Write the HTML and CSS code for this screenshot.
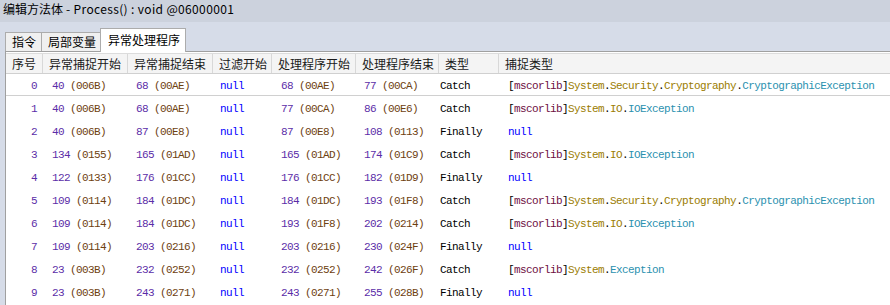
FILE: index.html
```html
<!DOCTYPE html>
<html>
<head>
<meta charset="utf-8">
<link rel="stylesheet" href="styles.css">
</head>
<body>
<div class="title">编辑方法体<span class="latin"> - Process() : void @06000001</span></div>
<div class="main">
  <div class="tabs">
    <div class="tab">指令</div>
    <div class="tab">局部变量</div>
    <div class="tab active">异常处理程序</div>
  </div>
  <div class="panel">
    <div class="grid head">
      <div class="hc">序号</div>
      <div class="hc">异常捕捉开始</div>
      <div class="hc">异常捕捉结束</div>
      <div class="hc">过滤开始</div>
      <div class="hc">处理程序开始</div>
      <div class="hc">处理程序结束</div>
      <div class="hc">类型</div>
      <div class="hc">捕捉类型</div>
    </div>

    <div class="grid row focus">
      <div class="c1 n">0</div>
      <div class="c2"><span class="n">40</span> <span class="h">(006B)</span></div>
      <div class="c3"><span class="n">68</span> <span class="h">(00AE)</span></div>
      <div class="c4 k">null</div>
      <div class="c5"><span class="n">68</span> <span class="h">(00AE)</span></div>
      <div class="c6"><span class="n">77</span> <span class="h">(00CA)</span></div>
      <div class="c7">Catch</div>
      <div class="c8">[<span class="a">mscorlib</span>]<span class="ns">System</span>.<span class="ns">Security</span>.<span class="ns">Cryptography</span>.<span class="t">CryptographicException</span></div>
    </div>

    <div class="grid row">
      <div class="c1 n">1</div>
      <div class="c2"><span class="n">40</span> <span class="h">(006B)</span></div>
      <div class="c3"><span class="n">68</span> <span class="h">(00AE)</span></div>
      <div class="c4 k">null</div>
      <div class="c5"><span class="n">77</span> <span class="h">(00CA)</span></div>
      <div class="c6"><span class="n">86</span> <span class="h">(00E6)</span></div>
      <div class="c7">Catch</div>
      <div class="c8">[<span class="a">mscorlib</span>]<span class="ns">System</span>.<span class="ns">IO</span>.<span class="t">IOException</span></div>
    </div>

    <div class="grid row">
      <div class="c1 n">2</div>
      <div class="c2"><span class="n">40</span> <span class="h">(006B)</span></div>
      <div class="c3"><span class="n">87</span> <span class="h">(00E8)</span></div>
      <div class="c4 k">null</div>
      <div class="c5"><span class="n">87</span> <span class="h">(00E8)</span></div>
      <div class="c6"><span class="n">108</span> <span class="h">(0113)</span></div>
      <div class="c7">Finally</div>
      <div class="c8 k">null</div>
    </div>

    <div class="grid row">
      <div class="c1 n">3</div>
      <div class="c2"><span class="n">134</span> <span class="h">(0155)</span></div>
      <div class="c3"><span class="n">165</span> <span class="h">(01AD)</span></div>
      <div class="c4 k">null</div>
      <div class="c5"><span class="n">165</span> <span class="h">(01AD)</span></div>
      <div class="c6"><span class="n">174</span> <span class="h">(01C9)</span></div>
      <div class="c7">Catch</div>
      <div class="c8">[<span class="a">mscorlib</span>]<span class="ns">System</span>.<span class="ns">IO</span>.<span class="t">IOException</span></div>
    </div>

    <div class="grid row">
      <div class="c1 n">4</div>
      <div class="c2"><span class="n">122</span> <span class="h">(0133)</span></div>
      <div class="c3"><span class="n">176</span> <span class="h">(01CC)</span></div>
      <div class="c4 k">null</div>
      <div class="c5"><span class="n">176</span> <span class="h">(01CC)</span></div>
      <div class="c6"><span class="n">182</span> <span class="h">(01D9)</span></div>
      <div class="c7">Finally</div>
      <div class="c8 k">null</div>
    </div>

    <div class="grid row">
      <div class="c1 n">5</div>
      <div class="c2"><span class="n">109</span> <span class="h">(0114)</span></div>
      <div class="c3"><span class="n">184</span> <span class="h">(01DC)</span></div>
      <div class="c4 k">null</div>
      <div class="c5"><span class="n">184</span> <span class="h">(01DC)</span></div>
      <div class="c6"><span class="n">193</span> <span class="h">(01F8)</span></div>
      <div class="c7">Catch</div>
      <div class="c8">[<span class="a">mscorlib</span>]<span class="ns">System</span>.<span class="ns">Security</span>.<span class="ns">Cryptography</span>.<span class="t">CryptographicException</span></div>
    </div>

    <div class="grid row">
      <div class="c1 n">6</div>
      <div class="c2"><span class="n">109</span> <span class="h">(0114)</span></div>
      <div class="c3"><span class="n">184</span> <span class="h">(01DC)</span></div>
      <div class="c4 k">null</div>
      <div class="c5"><span class="n">193</span> <span class="h">(01F8)</span></div>
      <div class="c6"><span class="n">202</span> <span class="h">(0214)</span></div>
      <div class="c7">Catch</div>
      <div class="c8">[<span class="a">mscorlib</span>]<span class="ns">System</span>.<span class="ns">IO</span>.<span class="t">IOException</span></div>
    </div>

    <div class="grid row">
      <div class="c1 n">7</div>
      <div class="c2"><span class="n">109</span> <span class="h">(0114)</span></div>
      <div class="c3"><span class="n">203</span> <span class="h">(0216)</span></div>
      <div class="c4 k">null</div>
      <div class="c5"><span class="n">203</span> <span class="h">(0216)</span></div>
      <div class="c6"><span class="n">230</span> <span class="h">(024F)</span></div>
      <div class="c7">Finally</div>
      <div class="c8 k">null</div>
    </div>

    <div class="grid row">
      <div class="c1 n">8</div>
      <div class="c2"><span class="n">23</span> <span class="h">(003B)</span></div>
      <div class="c3"><span class="n">232</span> <span class="h">(0252)</span></div>
      <div class="c4 k">null</div>
      <div class="c5"><span class="n">232</span> <span class="h">(0252)</span></div>
      <div class="c6"><span class="n">242</span> <span class="h">(026F)</span></div>
      <div class="c7">Catch</div>
      <div class="c8">[<span class="a">mscorlib</span>]<span class="ns">System</span>.<span class="t">Exception</span></div>
    </div>

    <div class="grid row">
      <div class="c1 n">9</div>
      <div class="c2"><span class="n">23</span> <span class="h">(003B)</span></div>
      <div class="c3"><span class="n">243</span> <span class="h">(0271)</span></div>
      <div class="c4 k">null</div>
      <div class="c5"><span class="n">243</span> <span class="h">(0271)</span></div>
      <div class="c6"><span class="n">255</span> <span class="h">(028B)</span></div>
      <div class="c7">Finally</div>
      <div class="c8 k">null</div>
    </div>
  </div>
</div>
</body>
</html>
```
FILE: styles.css
```css
html, body {
  margin: 0;
  padding: 0;
}
body {
  width: 890px;
  height: 305px;
  overflow: hidden;
  background: #ffffff;
  font-family: "Noto Sans CJK SC", "Noto Sans", sans-serif;
  font-size: 12px;
  color: #000;
}
.title {
  height: 22px;
  line-height: 18px;
  padding-left: 3px;
  background: #ccd2dd;
  color: #000;
  white-space: pre;
}
.title .latin {
  letter-spacing: 0.35px;
}
.main {
  background: #d6dce8;
}
.tabs {
  height: 29px;
  display: flex;
  align-items: flex-end;
  padding-left: 5px;
  position: relative;
  z-index: 2;
}
.tab {
  box-sizing: border-box;
  height: 19px;
  line-height: 17px;
  border: 1px solid #acacac;
  border-bottom: none;
  background: #f0f0f0;
  padding: 0 5px 0 6px;
  margin-right: -1px;
  color: #000;
}
.tab.active {
  height: 24px;
  line-height: 22px;
  background: #ffffff;
  padding: 0 5px 0 7px;
  margin-bottom: -1px;
  margin-left: -1px;
}
.panel {
  background: #ffffff;
  border-top: 1px solid #a0a0a0;
  border-left: 1px solid #a0a0a0;
  margin-left: 5px;
  padding-top: 1px;
  height: 260px;
}
.grid {
  display: grid;
  grid-template-columns: 37px 85px 85px 59px 84px 83px 60px 1fr;
}
.head {
  box-sizing: border-box;
  height: 20px;
  border-top: 1px solid #dcdcdc;
  background: #f4f4f4;
}
.hc {
  box-sizing: border-box;
  border-right: 1px solid #d8d8d8;
  padding-left: 6px;
  line-height: 19px;
  color: #1a1a1a;
  white-space: nowrap;
  overflow: hidden;
}
.hc:last-child {
  border-right: none;
}
.row {
  box-sizing: border-box;
  height: 23px;
  padding-top: 4px;
  line-height: 19px;
  font-family: "Liberation Mono", "DejaVu Sans Mono", monospace;
  font-size: 11px;
  letter-spacing: -0.6px;
  white-space: pre;
  color: #000;
}
.row.focus {
  border-top: 1px solid #d0d0d0;
  border-bottom: 1px solid #d0d0d0;
  padding-top: 4px;
  line-height: 17px;
}
.c1 { text-align: right; padding-right: 6px; }
.c2 { padding-left: 9px; }
.c3 { padding-left: 8px; }
.c4 { padding-left: 7px; }
.c5 { padding-left: 9px; }
.c6 { padding-left: 8px; }
.c7 { padding-left: 1px; }
.c8 { padding-left: 9px; }

.n { color: #5b2da8; }
.h { color: #6e4110; }
.k { color: #0000ff; }
.a { color: #6e0e3f; }
.ns { color: #9b7c00; }
.t { color: #2b91af; }
```
